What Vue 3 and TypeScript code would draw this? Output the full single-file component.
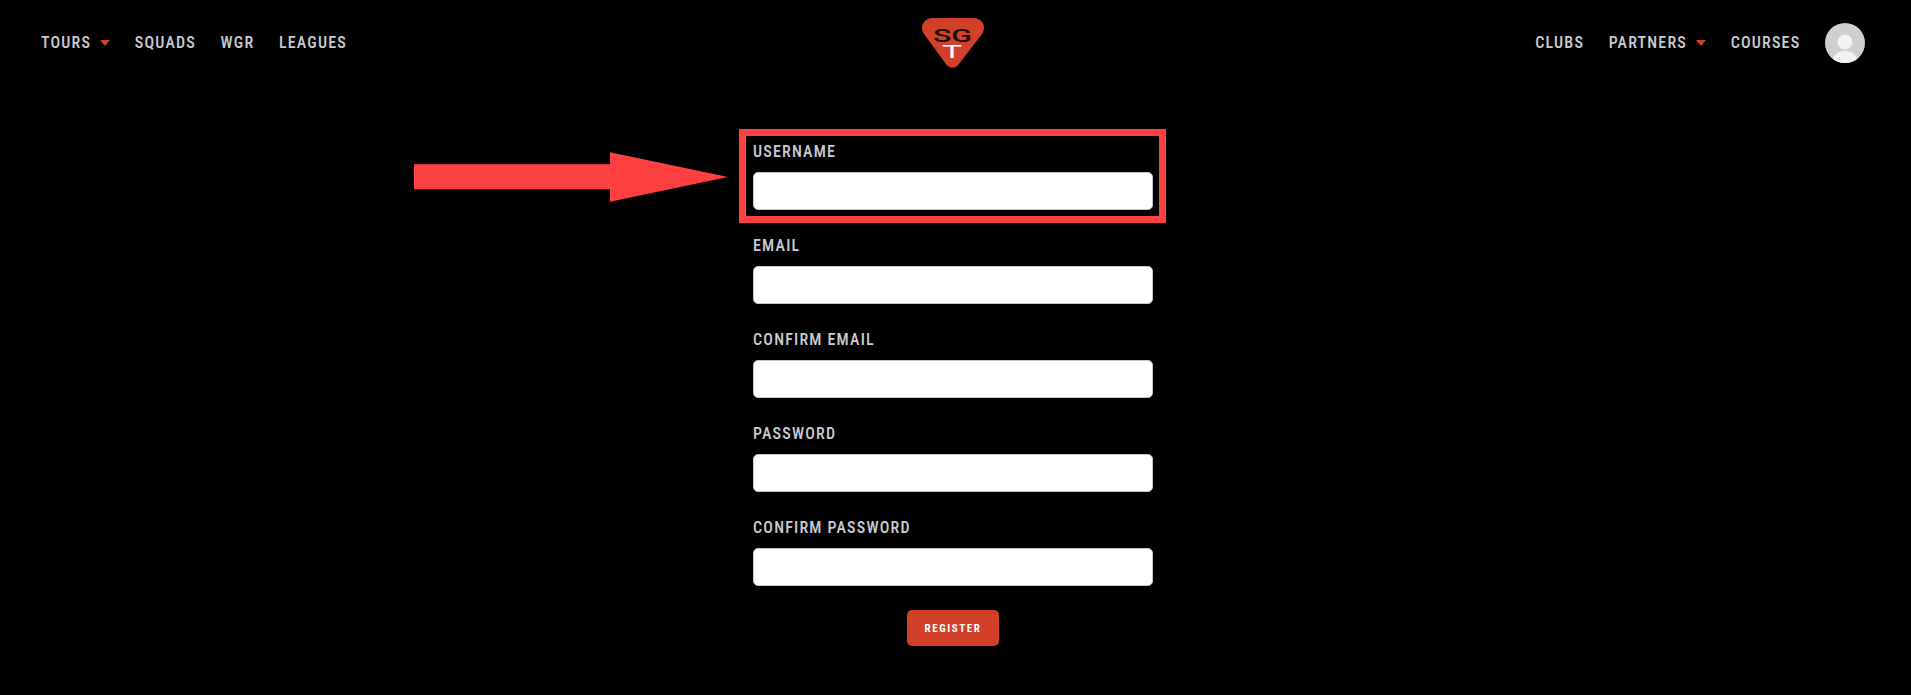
<script setup lang="ts">
const leftNav = [
  { label: 'TOURS', caret: true },
  { label: 'SQUADS', caret: false },
  { label: 'WGR', caret: false },
  { label: 'LEAGUES', caret: false },
]
const rightNav = [
  { label: 'CLUBS', caret: false },
  { label: 'PARTNERS', caret: true },
  { label: 'COURSES', caret: false },
]
const fields = [
  { label: 'USERNAME', type: 'text' },
  { label: 'EMAIL', type: 'email' },
  { label: 'CONFIRM EMAIL', type: 'email' },
  { label: 'PASSWORD', type: 'password' },
  { label: 'CONFIRM PASSWORD', type: 'password' },
]
</script>

<template>
  <div class="page">
    <header class="header">
      <nav class="nav">
        <a v-for="item in leftNav" :key="item.label" class="nav-link">
          {{ item.label }}<span v-if="item.caret" class="caret"></span>
        </a>
      </nav>
      <svg class="logo" width="64" height="50" viewBox="0 0 64 50" role="img" aria-label="SGT">
        <path d="M12 0H52C61 0 66 8 61 16L38 46C34 51 29 51 25 46L3 16C-2 8 3 0 12 0Z" fill="#d2402a" />
        <text x="12" y="23.5" class="logo-sg" textLength="39" lengthAdjust="spacingAndGlyphs">SG</text>
        <text x="21" y="40" class="logo-t" textLength="20" lengthAdjust="spacingAndGlyphs">T</text>
      </svg>
      <nav class="nav nav-right">
        <a v-for="item in rightNav" :key="item.label" class="nav-link">
          {{ item.label }}<span v-if="item.caret" class="caret"></span>
        </a>
        <svg class="avatar" width="40" height="40" viewBox="0 0 40 40" aria-hidden="true">
          <defs>
            <clipPath id="avatar-clip"><circle cx="20" cy="20" r="20" /></clipPath>
          </defs>
          <circle cx="20" cy="20" r="20" fill="#cfcfcf" />
          <g clip-path="url(#avatar-clip)" fill="#f2f2f2">
            <circle cx="20" cy="19" r="7.5" />
            <ellipse cx="20" cy="39" rx="13" ry="11" />
          </g>
        </svg>
      </nav>
    </header>

    <form class="form" @submit.prevent>
      <div v-for="field in fields" :key="field.label" class="field">
        <label class="label">{{ field.label }}</label>
        <input class="input" :type="field.type" />
      </div>
      <button class="submit" type="submit">REGISTER</button>

      <div class="highlight"></div>
      <svg class="arrow" width="314" height="50" viewBox="0 0 314 50" aria-hidden="true">
        <path d="M0 12.3H196V0.3L314 25L196 49.7V37.3H0Z" fill="#ff4040" />
      </svg>
    </form>
  </div>
</template>

<style>
html,
body {
  margin: 0;
  background: #000;
}
</style>

<style scoped>
.page {
  width: 1906px;
  min-height: 695px;
  background: #000;
  font-family: Roboto, "Liberation Sans", sans-serif;
  overflow: hidden;
}
.header {
  display: grid;
  grid-template-columns: 1fr auto 1fr;
  align-items: center;
  padding: 18px 41px 0;
  height: 50px;
}
.nav {
  display: flex;
  align-items: center;
  gap: 24.6px;
}
.nav-right {
  justify-content: flex-end;
}
.nav-link {
  display: flex;
  align-items: center;
  padding-bottom: 2px;
  font-stretch: condensed;
  font-size: 16px;
  font-weight: 500;
  letter-spacing: 1.2px;
  color: #c9ccd0;
}
.caret {
  width: 0;
  height: 0;
  margin-left: 9px;
  margin-top: 2px;
  border-left: 5.5px solid transparent;
  border-right: 5.5px solid transparent;
  border-top: 6px solid #d2402a;
}
.avatar {
  display: block;
}
.logo {
  display: block;
  overflow: visible;
}
.logo-sg {
  font-size: 18px;
  font-family: Roboto, sans-serif;
  font-weight: 500;
  fill: #1b0d0a;
}
.logo-t {
  font-size: 18px;
  font-family: Roboto, sans-serif;
  font-weight: 400;
  fill: #fff;
}
.form {
  position: relative;
  width: 400px;
  margin: 72px auto 0;
  display: flex;
  flex-direction: column;
}
.field {
  display: flex;
  flex-direction: column;
  margin-bottom: 24px;
}
.label {
  font-stretch: condensed;
  font-size: 16px;
  font-weight: 500;
  line-height: 24px;
  letter-spacing: 1.2px;
  color: #c9ccd0;
  margin-bottom: 8px;
}
.input {
  box-sizing: border-box;
  width: 400px;
  height: 38px;
  border: 1px solid #c4c7cc;
  border-radius: 5px;
  background: #fff;
  padding: 0 12px;
  outline: none;
}
.submit {
  align-self: center;
  width: 92px;
  height: 36px;
  border: none;
  border-radius: 5px;
  background: #d2402a;
  color: #fff;
  font-family: Roboto, sans-serif;
  font-stretch: condensed;
  font-size: 11px;
  font-weight: 700;
  letter-spacing: 1.6px;
}
.highlight {
  position: absolute;
  left: -14px;
  top: -11px;
  width: 413px;
  height: 80px;
  border: 7px solid #ff4040;
  pointer-events: none;
}
.arrow {
  position: absolute;
  left: -339px;
  top: 12px;
}
</style>
